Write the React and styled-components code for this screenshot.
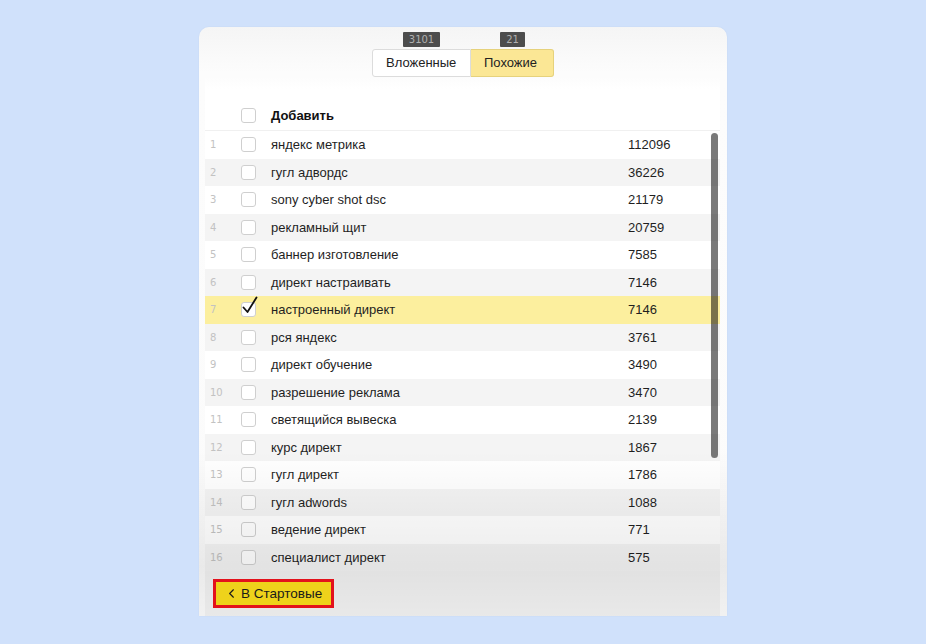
import styled, { createGlobalStyle } from 'styled-components'
import { ChevronLeft } from 'lucide-react'

const GlobalStyle = createGlobalStyle`
  html, body {
    margin: 0;
    padding: 0;
    background: #d0e1fb;
    font-family: 'Liberation Sans', Arial, sans-serif;
  }
`

const rows = [
  ['яндекс метрика', 112096],
  ['гугл адвордс', 36226],
  ['sony cyber shot dsc', 21179],
  ['рекламный щит', 20759],
  ['баннер изготовление', 7585],
  ['директ настраивать', 7146],
  ['настроенный директ', 7146],
  ['рся яндекс', 3761],
  ['директ обучение', 3490],
  ['разрешение реклама', 3470],
  ['светящийся вывеска', 2139],
  ['курс директ', 1867],
  ['гугл директ', 1786],
  ['гугл adwords', 1088],
  ['ведение директ', 771],
  ['специалист директ', 575],
]

function App() {
  return (
    <>
      <GlobalStyle />
      <Page>
        <Panel>
          <TabsBar>
            <Tab>
              <Badge>3101</Badge>
              <TabButton $first>Вложенные</TabButton>
            </Tab>
            <Tab>
              <Badge>21</Badge>
              <TabButton $active>Похожие</TabButton>
            </Tab>
          </TabsBar>

          <Table>
            <HeaderRow>
              <Num />
              <Check />
              <HeaderLabel>Добавить</HeaderLabel>
            </HeaderRow>
            {rows.map(([phrase, count], i) => (
              <Row key={i} $odd={i % 2 === 1} $selected={i === 6}>
                <Num>{i + 1}</Num>
                <Check $checked={i === 6}>
                  {i === 6 && (
                    <svg width="18" height="20" viewBox="0 0 18 20">
                      <path d="M2.5 11.5 L6.5 16 L15.5 1.5" fill="none" stroke="#111" strokeWidth="1.8" strokeLinecap="round" strokeLinejoin="round" />
                    </svg>
                  )}
                </Check>
                <Phrase>{phrase}</Phrase>
                <Count>{count}</Count>
              </Row>
            ))}
            <Scrollbar />
          </Table>

          <Footer>
            <BackButton>
              <ChevronLeft size={15} strokeWidth={1.8} />
              В Стартовые
            </BackButton>
          </Footer>
          <Shade />
        </Panel>
      </Page>
    </>
  )
}

const Page = styled.div`
  width: 926px;
  height: 644px;
  overflow: hidden;
  padding-top: 27px;
  box-sizing: border-box;
`

const Panel = styled.div`
  position: relative;
  width: 528px;
  height: 589px;
  margin: 0 auto;
  box-sizing: border-box;
  padding: 0 7px 0 6px;
  border-radius: 10px 10px 0 0;
  background: linear-gradient(#f5f5f5, #fcfcfc 45px, #fbfbfb);
  box-shadow: 0 0 2px rgba(0, 0, 0, 0.05);
  display: flex;
  flex-direction: column;
  overflow: hidden;
`

const TabsBar = styled.div`
  display: flex;
  justify-content: center;
  padding: 5px 0 0 1px;
  height: 50px;
  box-sizing: border-box;
`

const Tab = styled.div`
  display: flex;
  flex-direction: column;
  align-items: center;
`

const Badge = styled.div`
  height: 15px;
  line-height: 15px;
  padding: 0 6px;
  background: #4d4d4d;
  color: #b0b0b0;
  font-family: 'DejaVu Sans', sans-serif;
  font-size: 10px;
  border-radius: 1px;
  margin-bottom: 2px;
`

const TabButton = styled.div`
  height: 28px;
  box-sizing: border-box;
  line-height: 26px;
  font-size: 13px;
  color: #222;
  padding: 0 0 0 13px;
  width: ${p => (p.$active ? '83px' : '99px')};
  background: ${p => (p.$active ? '#fbe795' : '#fff')};
  border: 1px solid ${p => (p.$active ? '#e6d27c' : '#dcdcdc')};
  border-radius: ${p => (p.$first ? '3px 0 0 3px' : '0 3px 3px 0')};
  ${p => p.$active && 'border-left: none;'}
`

const Table = styled.div`
  position: relative;
  background: linear-gradient(#fcfcfc, #fff 12px);
  padding-top: 23px;
`

const HeaderRow = styled.div`
  display: flex;
  align-items: center;
  height: 30px;
  border-bottom: 1px solid #f0f0f0;
`

const Row = styled.div`
  display: flex;
  align-items: center;
  height: 27.5px;
  background: ${p => (p.$selected ? '#fcef9e' : p.$odd ? '#f4f4f4' : '#fff')};
`

const Num = styled.div`
  width: 36px;
  padding-left: 5px;
  box-sizing: border-box;
  font-family: 'DejaVu Sans', sans-serif;
  font-size: 10px;
  color: #c2c2c2;
  flex-shrink: 0;
`

const Check = styled.div`
  position: relative;
  width: 15px;
  height: 15px;
  box-sizing: border-box;
  border: 1px solid #cfcfcf;
  border-radius: 3px;
  background: #fff;
  flex-shrink: 0;
  margin-right: 15px;

  svg {
    position: absolute;
    left: -1px;
    top: -7px;
  }
`

const HeaderLabel = styled.div`
  font-size: 13px;
  font-weight: bold;
  color: #111;
`

const Phrase = styled.div`
  flex: 1;
  font-size: 13px;
  color: #1f1f1f;
`

const Count = styled.div`
  width: 92px;
  font-size: 13px;
  color: #1f1f1f;
`

const Scrollbar = styled.div`
  position: absolute;
  right: 2px;
  top: 56px;
  width: 7px;
  height: 325px;
  border-radius: 4px;
  background: rgba(0, 0, 0, 0.52);
`

const Footer = styled.div`
  flex: 1;
  background: #f2f2f2;
  padding: 8px 0 0 8px;
`

const BackButton = styled.button`
  position: relative;
  z-index: 2;
  display: flex;
  align-items: center;
  gap: 2px;
  height: 29px;
  width: 121px;
  box-sizing: border-box;
  padding: 0 0 0 8px;
  border: 3px solid #e3121c;
  background: #eed21b;
  color: #1a1a1a;
  font-family: 'Liberation Sans', Arial, sans-serif;
  font-size: 13.5px;
`

const Shade = styled.div`
  position: absolute;
  z-index: 1;
  left: 0;
  right: 0;
  bottom: 0;
  height: 165px;
  pointer-events: none;
  background: linear-gradient(rgba(0, 0, 0, 0), rgba(0, 0, 0, 0.04) 35%, rgba(0, 0, 0, 0.07) 70%, rgba(0, 0, 0, 0.04));
`

export default App
